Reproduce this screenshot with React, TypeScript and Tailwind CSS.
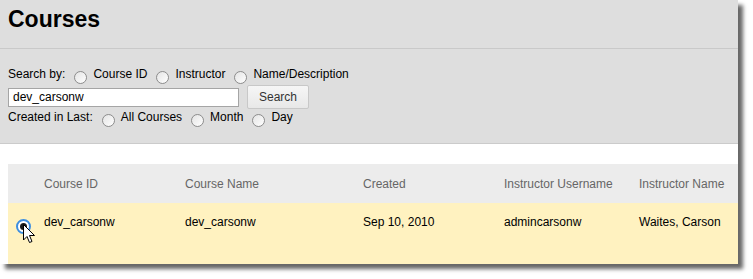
import React from "react"

function Radio({ checked = false }: { checked?: boolean }) {
  if (checked) {
    return (
      <span className="inline-flex items-center justify-center w-[15px] h-[15px] rounded-full border-2 border-[#3d8ee0] bg-white">
        <span className="w-[7px] h-[7px] rounded-full bg-[#1a1a1a]" />
      </span>
    )
  }
  return (
    <span className="inline-block w-[13px] h-[13px] rounded-full border border-[#8c8c8c] bg-gradient-to-br from-[#e4e4e4] to-white translate-y-[3px]" />
  )
}

function Option({ label }: { label: string }) {
  return (
    <span className="inline-flex items-center">
      <span className="ml-[9px] mr-[6px] flex">
        <Radio />
      </span>
      <span>{label}</span>
    </span>
  )
}

function Cursor() {
  return (
    <svg className="absolute left-[23px] top-[224px]" width="13" height="20" viewBox="0 0 13 20">
      <path
        d="M0.5 0.5 L0.5 16 L4 12.5 L6.5 18.5 L9 17.5 L6.5 11.5 L11.5 11.5 Z"
        fill="white"
        stroke="black"
        strokeWidth="1"
        strokeLinejoin="miter"
      />
    </svg>
  )
}

const columns = [
  { title: "Course ID", value: "dev_carsonw", w: "w-[141px]" },
  { title: "Course Name", value: "dev_carsonw", w: "w-[178px]" },
  { title: "Created", value: "Sep 10, 2010", w: "w-[141px]" },
  { title: "Instructor Username", value: "admincarsonw", w: "w-[135px]" },
  { title: "Instructor Name", value: "Waites, Carson", w: "flex-1" },
]

export default function App() {
  return (
    <div className="w-[753px] h-[279px] bg-white font-['Liberation_Sans',Arial,sans-serif] text-[12px] text-black relative">
      <div className="w-[738px] h-[264px] bg-white overflow-hidden shadow-[5px_5px_4px_rgba(0,0,0,0.6)]">
        {/* Header */}
        <div className="bg-[#dedede] h-[49px] border-b border-[#c9c9c9] px-[8px] pt-[5px]">
          <h1 className="text-[23px] font-bold leading-[28px]">Courses</h1>
        </div>

        {/* Search form */}
        <div className="bg-[#dedede] h-[95px] border-b border-[#cbcbcb] px-[8px] pt-[18px]">
          <div className="flex items-center leading-[14px] h-[14px]">
            <span>Search by:</span>
            <Option label="Course ID" />
            <Option label="Instructor" />
            <Option label="Name/Description" />
          </div>
          <div className="flex items-center mt-[4px] h-[24px]">
            <div className="w-[231px] h-[19px] bg-white border border-[#a5a5a5] flex items-center px-[4px]">
              dev_carsonw
            </div>
            <button className="ml-[8px] w-[62px] h-[24px] rounded-[2px] border border-[#c8c8c8] bg-gradient-to-b from-[#f6f6f6] to-[#e8e8e8] text-[#333] text-[12px]">
              Search
            </button>
          </div>
          <div className="flex items-center leading-[14px] h-[14px] mt-[1px]">
            <span>Created in Last:</span>
            <Option label="All Courses" />
            <Option label="Month" />
            <Option label="Day" />
          </div>
        </div>

        {/* Results table */}
        <div className="ml-[8px] mt-[20px]">
          <div className="flex h-[39px] items-center bg-[#ececec] text-[#666]">
            <div className="w-[36px]" />
            {columns.map((c) => (
              <div key={c.title} className={c.w}>
                {c.title}
              </div>
            ))}
          </div>
          <div className="flex h-[61px] bg-[#fff2c0] pt-[11px]">
            <div className="w-[36px] pl-[8px] pt-[3px]">
              <Radio checked />
            </div>
            {columns.map((c) => (
              <div key={c.title} className={`${c.w} leading-[14px] pt-[1px]`}>
                {c.value}
              </div>
            ))}
          </div>
        </div>
      </div>
      <Cursor />
    </div>
  )
}
